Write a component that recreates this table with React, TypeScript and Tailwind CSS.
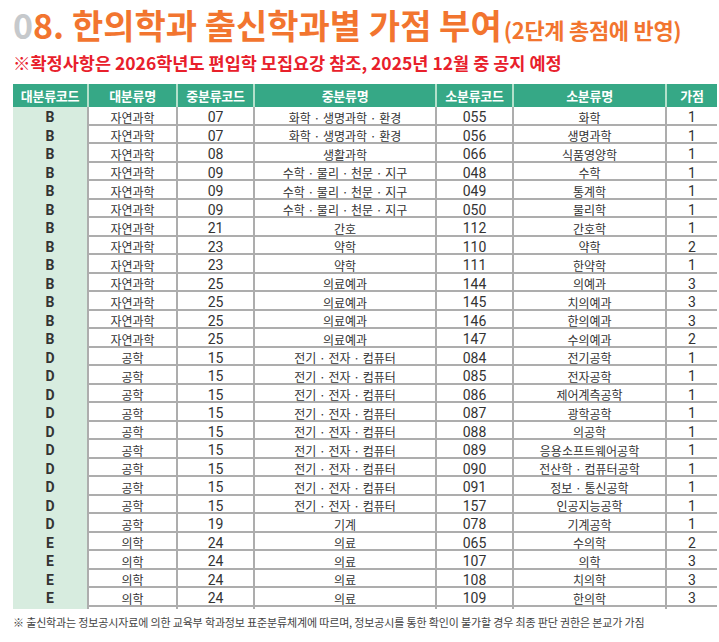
const rows: [string, string, string, string, string, string, string][] = [
  ['B', '자연과학', '07', '화학 · 생명과학 · 환경', '055', '화학', '1'],
  ['B', '자연과학', '07', '화학 · 생명과학 · 환경', '056', '생명과학', '1'],
  ['B', '자연과학', '08', '생활과학', '066', '식품영양학', '1'],
  ['B', '자연과학', '09', '수학 · 물리 · 천문 · 지구', '048', '수학', '1'],
  ['B', '자연과학', '09', '수학 · 물리 · 천문 · 지구', '049', '통계학', '1'],
  ['B', '자연과학', '09', '수학 · 물리 · 천문 · 지구', '050', '물리학', '1'],
  ['B', '자연과학', '21', '간호', '112', '간호학', '1'],
  ['B', '자연과학', '23', '약학', '110', '약학', '2'],
  ['B', '자연과학', '23', '약학', '111', '한약학', '1'],
  ['B', '자연과학', '25', '의료예과', '144', '의예과', '3'],
  ['B', '자연과학', '25', '의료예과', '145', '치의예과', '3'],
  ['B', '자연과학', '25', '의료예과', '146', '한의예과', '3'],
  ['B', '자연과학', '25', '의료예과', '147', '수의예과', '2'],
  ['D', '공학', '15', '전기 · 전자 · 컴퓨터', '084', '전기공학', '1'],
  ['D', '공학', '15', '전기 · 전자 · 컴퓨터', '085', '전자공학', '1'],
  ['D', '공학', '15', '전기 · 전자 · 컴퓨터', '086', '제어계측공학', '1'],
  ['D', '공학', '15', '전기 · 전자 · 컴퓨터', '087', '광학공학', '1'],
  ['D', '공학', '15', '전기 · 전자 · 컴퓨터', '088', '의공학', '1'],
  ['D', '공학', '15', '전기 · 전자 · 컴퓨터', '089', '응용소프트웨어공학', '1'],
  ['D', '공학', '15', '전기 · 전자 · 컴퓨터', '090', '전산학 · 컴퓨터공학', '1'],
  ['D', '공학', '15', '전기 · 전자 · 컴퓨터', '091', '정보 · 통신공학', '1'],
  ['D', '공학', '15', '전기 · 전자 · 컴퓨터', '157', '인공지능공학', '1'],
  ['D', '공학', '19', '기계', '078', '기계공학', '1'],
  ['E', '의학', '24', '의료', '065', '수의학', '2'],
  ['E', '의학', '24', '의료', '107', '의학', '3'],
  ['E', '의학', '24', '의료', '108', '치의학', '3'],
  ['E', '의학', '24', '의료', '109', '한의학', '3'],
]

const headers = ['대분류코드', '대분류명', '중분류코드', '중분류명', '소분류코드', '소분류명', '가점']

const cols = 'grid grid-cols-[76px_89px_77px_182px_77px_153px_50px]'
const kr = "font-['Noto_Sans_CJK_KR',sans-serif] text-[12px]"
const num = "font-['Roboto','Noto_Sans_CJK_KR',sans-serif] text-[14px]"

export default function App() {
  return (
    <div className="w-[719px] h-[642px] bg-white pl-[13px] text-[#333] font-['Noto_Sans_CJK_KR',sans-serif] overflow-hidden">
      {/* Title */}
      <h1 className="h-[50px] leading-[50px] text-[34px] font-bold whitespace-nowrap">
        <span className="text-[#c6c9cc]">0</span>
        <span className="text-[#f2752f]">8. 한의학과 출신학과별 가점 부여</span>
        <span className="text-[#f2752f] text-[22px] ml-[2px] tracking-[-0.3px]">(2단계 총점에 반영)</span>
      </h1>
      <p className="h-[26px] leading-[26px] text-[17.5px] font-bold text-[#e8202b] whitespace-nowrap">
        ※확정사항은 2026학년도 편입학 모집요강 참조, 2025년 12월 중 공지 예정
      </p>

      {/* Table */}
      <div className="mt-[8px] w-[704px]">
        <div className={`${cols} h-[23px] bg-[#36a886] text-white`}>
          {headers.map((h, i) => (
            <div
              key={h}
              className={`flex items-center justify-center text-[13px] font-bold tracking-[-0.3px] ${i < 6 ? 'border-r-2 border-[#b4e0cb]' : ''}`}
            >
              {h}
            </div>
          ))}
        </div>
        {rows.map((r, idx) => (
          <div key={idx} className={`${cols} h-[18.5px] border-b-2 border-[#adadad]`}>
            <div className={`flex items-center justify-center bg-[#d7ecdf] border-r-2 border-[#adadad] font-bold ${num}`}>{r[0]}</div>
            <div className={`flex items-center justify-center border-r-2 border-[#adadad] ${kr}`}>{r[1]}</div>
            <div className={`flex items-center justify-center border-r-2 border-[#adadad] ${num}`}>{r[2]}</div>
            <div className={`flex items-center justify-center border-r-2 border-[#adadad] ${kr}`}>{r[3]}</div>
            <div className={`flex items-center justify-center border-r-2 border-[#adadad] ${num}`}>{r[4]}</div>
            <div className={`flex items-center justify-center border-r-2 border-[#adadad] ${kr}`}>{r[5]}</div>
            <div className={`flex items-center justify-center ${num}`}>{r[6]}</div>
          </div>
        ))}
      </div>

      <p className="mt-[6px] leading-[18px] text-[11px] text-[#444] whitespace-nowrap tracking-[-0.15px]">
        ※ 출신학과는 정보공시자료에 의한 교육부 학과정보 표준분류체계에 따르며, 정보공시를 통한 확인이 불가할 경우 최종 판단 권한은 본교가 가짐
      </p>
    </div>
  )
}
